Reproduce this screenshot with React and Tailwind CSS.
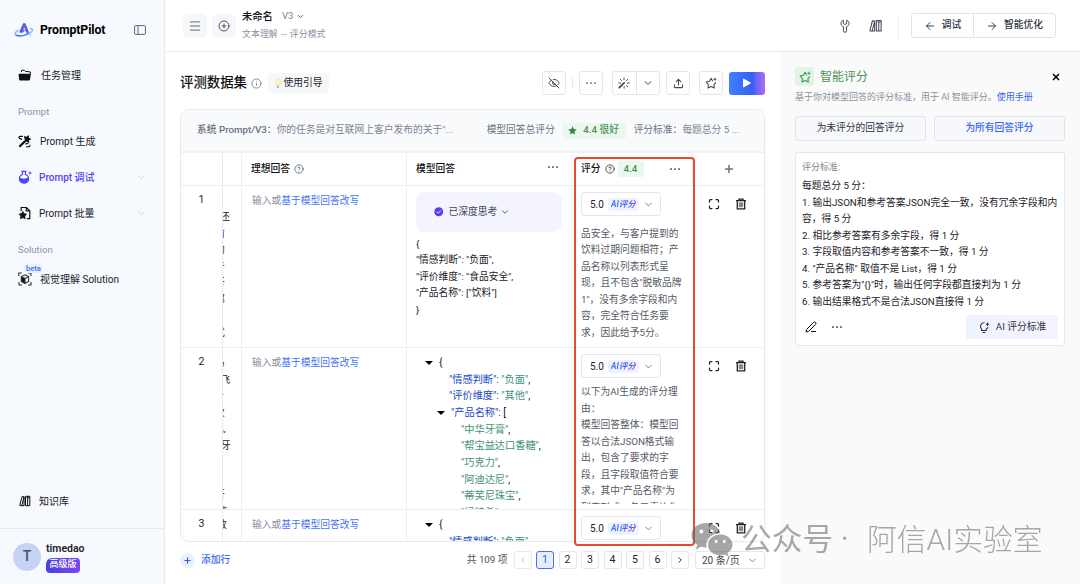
import React from 'react';
import {
  ArrowLeft,
  ArrowRight,
  ChevronDown,
  ChevronLeft,
  ChevronRight,
  CircleHelp,
  CirclePlus,
  EyeOff,
  Info,
  Maximize,
  Menu,
  PenLine,
  Plus,
  Upload,
  X,
} from 'lucide-react';

const ideal = '基于模型回答改写';

const criteria = [
  '每题总分 5 分：',
  '1. 输出JSON和参考答案JSON完全一致，没有冗余字段和内',
  '容，得 5 分',
  '2. 相比参考答案有多余字段，得 1 分',
  '3. 字段取值内容和参考答案不一致，得 1 分',
  '4. "产品名称" 取值不是 List，得 1 分',
  '5. 参考答案为"{}"时，输出任何字段都直接判为 1 分',
  '6. 输出结果格式不是合法JSON直接得 1 分',
];

const reasonOne = [
  '品安全，与客户提到的',
  '饮料过期问题相符；产',
  '品名称以列表形式呈',
  '现，且不包含"脱敏品牌',
  '1"，没有多余字段和内',
  '容，完全符合任务要',
  '求，因此给予5分。',
];

const reasonTwo = [
  '以下为AI生成的评分理',
  '由：',
  '模型回答整体：模型回',
  '答以合法JSON格式输',
  '出，包含了要求的字',
  '段，且字段取值符合要',
  '求，其中"产品名称"为',
  '列表形式，各元素均为',
];

// Column scrolled under the index column, only the tail of each line shows
const clippedOne = [
  ['还', -3],
  ['前', -8],
  ['的', -8],
  ['于', -8],
  ['行', -8],
  ['部', -8],
  ['', 0],
  ['式', -8],
];
const clippedTwo = [
  ['马', -8],
  ['飞', -2.5],
  ['一', -9],
  ['次', -8],
  ['乱,', -9],
  ['牙', -2],
  ['', 0],
  ['', 0],
  ['行', -8],
  ['能', -5],
];
const clippedThree = [['敢', -6]];

function Dots({ className = '' }) {
  return (
    <svg viewBox="0 0 12 4" className={`h-1 w-3 shrink-0 ${className}`} fill="currentColor">
      <circle cx="2" cy="2" r="0.85" />
      <circle cx="6" cy="2" r="0.85" />
      <circle cx="10" cy="2" r="0.85" />
    </svg>
  );
}

function StarIcon({ className = '' }) {
  return (
    <svg viewBox="0 0 16 16" className={className} fill="none" stroke="currentColor" strokeWidth="1.4" strokeLinejoin="round">
      <path d="M10.4 5.6 8.2 1.8 6 5.6 1.5 6.7l3 3.4-.5 4.6 4.2-1.9 4.2 1.9-.5-4.6 2.5-2.9" />
      <path d="M13.3 1v4M11.3 3h4" strokeWidth="1.2" />
    </svg>
  );
}

function BooksIcon({ className = '' }) {
  return (
    <svg viewBox="0 0 14 14" className={className} fill="none" stroke="currentColor" strokeWidth="1.1" strokeLinejoin="round">
      <path d="M7.6 1.5h5v11h-5zM10.1 1.5v11M9 3.2h3" />
      <path d="m3.6 1.8 2.3.4L3.2 12.6l-2.3-.5zM5.9 2v10.5H3.2" />
    </svg>
  );
}

function WandIcon() {
  return (
    <svg viewBox="0 0 14 14" className="size-3" fill="none" stroke="currentColor" strokeWidth="1.1" strokeLinecap="round">
      <path d="m1.5 12.5 5.8-5.8" strokeWidth="2" />
      <path d="M7 1v2.2M11.4 2.6 9.7 4.3M13 7h-2.2M11.4 11.4 9.9 9.9M7.2 13v-2M2.6 2.6l1.6 1.6M1 7h2" />
    </svg>
  );
}

function TrashIcon() {
  return (
    <svg viewBox="0 0 12 12" className="size-3" fill="none" stroke="#222" strokeWidth="1.3">
      <path d="M1 2.7h10M4 2.3V1.2h4v1.1M2.3 2.9v7.9h7.4V2.9" />
      <path d="M4.2 4.8h3.6v4H4.2z" fill="#888" stroke="#777" strokeWidth="0.8" />
    </svg>
  );
}

function Logo() {
  return (
    <svg viewBox="0 0 20 16" className="h-4 w-5" fill="none">
      <path d="M5 10.5 9.2 1.2h2.1l3.9 9.6h-3L10.2 5l-1 2.8 2.2.3-3 2.6z" fill="#5b57e8" />
      <path d="M4.5 8.2C1 10 .2 12.4 2.3 13.5c3.3 1.6 11.2-.3 14.7-3.3 2.4-2 1.9-3.5-.9-3.7" stroke="#7cbcf8" strokeWidth="1.5" />
      <path d="M2.1 13.1c3.8 1.5 9.4.2 12.9-2.1" stroke="#3f7bf0" strokeWidth="1.3" />
      <circle cx="16.5" cy="13" r="0.8" fill="#7cbcf8" />
    </svg>
  );
}

function FolderIcon() {
  return (
    <svg viewBox="0 0 14 12" className="h-3 w-3.5" fill="#111">
      <path d="M1.6 4.7h10.2a1 1 0 0 1 1 1.2l-.8 4.6a1.2 1.2 0 0 1-1.2 1H2.3a1.2 1.2 0 0 1-1.2-1L.6 5.9a1 1 0 0 1 1-1.2z" />
      <path d="m3.3 3 .5-1.9 2.6.3.8.9 5 .6.3 2" fill="none" stroke="#111" strokeWidth="1" />
    </svg>
  );
}

function GenerateIcon() {
  return (
    <svg viewBox="0 0 14 14" className="size-[13px]" fill="none" stroke="#111" strokeWidth="1.2">
      <path d="m1.5 12.7 6-6" strokeWidth="2.4" />
      <path d="m7.2 2 2 .7 1.8-1.5.2 2.2 2 1-1.8 1.1v2.3L9.5 6.5l-2.3.7.7-2.1z" fill="#111" />
      <path d="M5.3 1.5H2.2a1 1 0 0 0 0 2.4c1.4 0 1.8.6 1.8 1.6M8.2 10.3c0-1.3 1.4-1.3 2.8-1.3M12.5 10.5c1 1.2 0 2.4-1.4 2.2H8.7" />
    </svg>
  );
}

function FlaskIcon() {
  return (
    <svg viewBox="0 0 14 14" className="size-[14px]" fill="none" stroke="#5147f5" strokeWidth="1.2">
      <path d="M3.2 1.4h5.4M4.5 1.5v3C2.4 5.3 1.3 7 1.5 9c.3 2.3 2 3.9 4.5 3.9s4.3-1.6 4.5-3.9c.2-2-1-3.7-3.1-4.5v-3" />
      <path d="M1.5 8.8c2-.9 3.3.9 5 .5 1.500-.3 2.200-1.200 4-.8-.2 2.700-2 4.400-4.500 4.400S1.700 11.300 1.500 8.800z" fill="#5147f5" />
      <path d="M12 1.500v3M10.500 3h3" strokeWidth="1" />
    </svg>
  );
}

function BatchIcon() {
  return (
    <svg viewBox="0 0 14 14" className="size-[14px]" fill="none" stroke="#111" strokeWidth="1.2">
      <path d="M3.2 5V1.500h5.300l3.300 3.200v8H8.800M8.300 1.500v3.400h3.400" />
      <path d="m4.800 5.300 1.300 2.300 2.600.5-1.800 2 .3 2.700-2.400-1.100-2.400 1.100.3-2.700-1.800-2 2.600-.5z" fill="#111" strokeWidth="0.6" />
    </svg>
  );
}

function CubeIcon() {
  return (
    <svg viewBox="0 0 14 14" className="size-[14px]" fill="none" stroke="#333" strokeWidth="1.1">
      <path d="M.8 4V1h3M10 1h3v3M13 10v3h-3M4 13H1v-3" />
      <path d="m7 2.800 3.600 1.800v4.800L7 11.300 3.400 9.400V4.600z" />
      <path d="M7 6.400 3.400 4.600v4.800L7 11.300z" fill="#111" />
      <path d="m7 6.400 3.600-1.800" />
    </svg>
  );
}

function NavItem({ icon, label, active, arrow, gap }) {
  return (
    <div className="flex h-9 items-center pr-[17px] pl-[17px]">
      <span className="flex w-[15px] justify-center">{icon}</span>
      <span className={`${gap || 'ml-2'} flex-1 text-[10px] whitespace-pre ${active ? 'font-medium text-[#5147f5]' : 'text-[#1d2129]'}`}>
        {label}
      </span>
      {arrow && <ChevronDown className="size-[11px] text-[#c3c8d0]" strokeWidth={1.6} />}
    </div>
  );
}

function Sidebar() {
  return (
    <aside className="flex h-full w-[165px] shrink-0 flex-col border-r border-[#e6e9ef] bg-[#f6f9fe]">
      <div className="flex h-[57px] items-center pt-[3px] pr-[18px] pl-[14px]">
        <Logo />
        <span className="ml-1.5 flex-1 text-[12.300px] font-bold tracking-[-0.1px] text-black">PromptPilot</span>
        <svg viewBox="0 0 12 10" className="h-[10px] w-3" fill="none" stroke="#5d6470" strokeWidth="1">
          <rect x="0.600" y="0.600" width="10.800" height="8.800" rx="1" />
          <path d="M4 .6v8.800" />
        </svg>
      </div>
      <NavItem icon={<FolderIcon />} label="任务管理" gap="ml-[9px]" />
      <div className="mt-[9px] flex h-[21px] items-center pl-[18px] text-[9.500px] text-[#8b94a8]">Prompt</div>
      <NavItem icon={<GenerateIcon />} label="Prompt 生成" />
      <NavItem icon={<FlaskIcon />} label="Prompt 调试" gap="ml-[7px]" active arrow />
      <NavItem icon={<BatchIcon />} label="Prompt 批量" gap="ml-[7px]" arrow />
      <div className="mt-[9px] flex h-[21px] items-center pl-[18px] text-[9.500px] text-[#8b94a8]">Solution</div>
      <div className="relative">
        <NavItem icon={<CubeIcon />} label="视觉理解 Solution" />
        <span className="absolute top-[3px] left-6 rounded-full bg-[#e6f0ff] px-0.5 text-[7.500px] leading-[9px] font-medium text-[#3b6bf5]">beta</span>
      </div>
      <div className="flex-1" />
      <NavItem icon={<BooksIcon className="size-3" />} label="知识库" gap="ml-[7px]" />
      <div className="mt-[9px] flex h-14 items-center border-t border-[#e6e9ef] pl-[13px]">
        <div className="flex size-[28px] items-center justify-center rounded-full bg-[#c6d3f7] text-[14px] font-medium text-[#4c5260]">T</div>
        <div className="ml-[5px] pt-px">
          <div className="text-[10.500px] leading-[14px] font-semibold text-[#1d2129]">timedao</div>
          <div className="mt-0.5 flex h-[15px] w-[34px] items-center justify-center rounded-[4px] rounded-tl-[6px] bg-linear-to-r from-[#4a41dc] to-[#7845f6] text-[9px] font-medium text-white">
            高级版
          </div>
        </div>
      </div>
    </aside>
  );
}

function Header() {
  return (
    <header className="flex h-[52px] shrink-0 items-center border-b border-[#e8eaee] bg-white pr-6 pl-[18px]">
      <button className="flex size-6 items-center justify-center rounded-[5px] bg-[#f6f7f9]">
        <Menu className="size-[14px] text-[#596070]" strokeWidth={1.600} />
      </button>
      <button className="ml-[5px] flex size-6 items-center justify-center rounded-[5px] bg-[#f6f7f9]">
        <CirclePlus className="size-3 text-[#4e5460]" strokeWidth={2} />
      </button>
      <div className="ml-1.5 h-[36px]">
        <div className="flex h-[18px] items-center text-[10.300px] font-medium text-[#111]">
          未命名
          <span className="ml-[9px] text-[9.500px] font-normal text-[#7b8391]">V3</span>
          <ChevronDown className="ml-[3px] size-[9px] text-[#5a6270]" strokeWidth={2.500} />
        </div>
        <div className="flex h-[18px] items-center text-[8.950px] whitespace-pre text-[#8a919f]">
          文本理解<span className="mx-[3px] h-px w-[6px] bg-[#c3c7ce]" />评分模式
        </div>
      </div>
      <div className="flex-1" />
      <svg viewBox="0 0 12 14" className="h-[14px] w-3 text-[#444b57]" fill="none" stroke="currentColor" strokeWidth="1" strokeLinejoin="round">
        <path d="M4.300 1.200v3.300L6 5.500l1.700-1V1.200c1.600.7 2.500 2 2.300 3.600C9.900 6.200 9 7.100 7.500 7.700v4.100a1.500 1.500 0 0 1-3 0V7.700C3 7.100 2.100 6.200 2 4.800c-.2-1.600.7-2.900 2.300-3.600z" />
      </svg>
      <BooksIcon className="ml-[18px] size-[13.500px] text-[#444b57]" />
      <div className="ml-4 h-6 w-px bg-[#eceef1]" />
      <div className="ml-3 flex h-[25px] rounded-[3px] border border-[#e0e3e9] text-[9.750px] font-medium text-[#30353f]">
        <button className="flex w-[62px] items-center justify-center border-r border-[#e0e3e9]">
          <ArrowLeft className="mr-[6px] size-[12px]" strokeWidth={1.900} />调试
        </button>
        <button className="flex w-[81px] items-center justify-center">
          <ArrowRight className="mr-[6px] size-[12px]" strokeWidth={1.900} />智能优化
        </button>
      </div>
    </header>
  );
}

function Toolbar() {
  const box = 'flex size-6 items-center justify-center rounded-[3px] border border-[#e3e6ec] text-[#3f4550]';
  return (
    <div className="flex h-6 items-center">
      <h1 className="text-[13.400px] font-medium text-[#111]">评测数据集</h1>
      <Info className="ml-1 size-[11px] text-[#7a818e]" strokeWidth={2} />
      <button className="ml-[6px] flex h-5 w-[61px] items-center justify-center rounded-[3px] bg-[#f6f7f9] text-[9.750px] text-[#22262e]">
        <svg viewBox="0 0 8 12" className="mr-px h-[11px] w-2">
          <path d="M4 1a3 3 0 0 1 3 3c0 1.500-1.300 2-1.500 4h-3C2.300 6 1 5.500 1 4a3 3 0 0 1 3-3z" fill="#fff3c4" stroke="#f3e1a0" strokeWidth="0.600" />
          <path d="M2.800 9h2.400M3.200 10.400h1.600" stroke="#9a9a9a" strokeWidth="1" />
        </svg>
        使用引导
      </button>
      <div className="flex-1" />
      <button className={box}>
        <EyeOff className="size-3" strokeWidth={1.900} />
      </button>
      <div className="ml-[6px] h-3 w-px bg-[#e6e8ec]" />
      <button className={`${box} ml-[6px]`}>
        <Dots />
      </button>
      <div className="ml-[9px] flex h-6 w-12 rounded-[3px] border border-[#e3e6ec] text-[#3f4550]">
        <span className="flex flex-1 items-center justify-center border-r border-[#e3e6ec]">
          <WandIcon />
        </span>
        <span className="flex flex-1 items-center justify-center">
          <ChevronDown className="size-3" strokeWidth={2} />
        </span>
      </div>
      <button className={`${box} ml-[6px]`}>
        <Upload className="size-[11px]" strokeWidth={2.300} />
      </button>
      <button className={`${box} ml-[9px]`}>
        <StarIcon className="size-[12px]" />
      </button>
      <button className="ml-[6px] flex h-[23px] w-9 items-center justify-center rounded-[3px] bg-linear-to-r from-[#4080ff] via-[#365ff5] via-65% to-[#ae6af5]">
        <svg viewBox="0 0 10 10" className="size-[10px]" fill="#fff" stroke="#fff" strokeWidth="1" strokeLinejoin="round">
          <path d="M1.500 1v8l7-4z" />
        </svg>
      </button>
    </div>
  );
}

function ScoreSelect() {
  return (
    <div className="flex h-6 w-20 items-center rounded-[3px] border border-[#e3e6ec] bg-white pl-2 text-[10px] text-[#1d2129]">
      5.0
      <span className="ml-[4px] rounded-[4px] bg-linear-to-r from-[#eaf3ff] to-[#f6f0ff] px-[3px] text-[8.500px] leading-[13px] font-bold">
        <span className="bg-linear-to-r from-[#3e78fb] to-[#6256f2] bg-clip-text text-transparent italic">AI评分</span>
      </span>
      <ChevronDown className="ml-[4px] size-[11px] text-[#5f6675]" strokeWidth={1.800} />
    </div>
  );
}

function Lines({ lines, className }) {
  return (
    <div className={className}>
      {lines.map((line) => (
        <div key={line} className="h-[16.500px] leading-[16.500px] whitespace-pre">
          {line}
        </div>
      ))}
    </div>
  );
}

function Clipped({ lines, className }) {
  return (
    <div className={`overflow-hidden border-r border-[#eceef3] text-[#1d2129] ${className}`}>
      {lines.map(([char, shift], i) => (
        <div key={i} className="h-[16.500px] leading-[16.500px] whitespace-nowrap" style={{ marginLeft: shift }}>
          {char}
        </div>
      ))}
    </div>
  );
}

function Caret() {
  return <span className="mr-[6px] h-0 w-0 border-x-4 border-t-[4.500px] border-x-transparent border-t-black" />;
}

function JsonPair({ name, value }) {
  return (
    <div className="h-[16.600px] pl-[24px] whitespace-pre">
      <span className="text-[#2148c7]">"{name}": </span>
      <span className="text-[#42917d]">"{value}"</span>,
    </div>
  );
}

function JsonTree({ kind, items }) {
  return (
    <div className="pt-[7px] pl-[9px] text-[10.200px] leading-[16.600px] text-[#111]">
      <div className="flex h-[16.600px] items-center"><Caret />{'{'}</div>
      <JsonPair name="情感判断" value="负面" />
      <JsonPair name="评价维度" value={kind} />
      <div className="flex h-[17px] items-center pl-3 whitespace-pre">
        <Caret /><span className="text-[#2148c7]">"产品名称": </span>[
      </div>
      {items.map((item) => (
        <div key={item} className="h-[16.600px] pl-[36px]">
          <span className="text-[#42917d]">"{item}"</span>,
        </div>
      ))}
    </div>
  );
}

function Row({ index, clipped, clipPad, last, model, reason }) {
  return (
    <div className={`grid grid-cols-[42px_19px_165px_165px_121px_71px] overflow-hidden ${last ? 'h-[31px]' : 'h-[162px] border-b border-[#eceef3]'}`}>
      <div className="border-r border-[#e6e8ef] pt-[6px] text-center text-[10.500px] leading-4 text-[#1d2129]">{index}</div>
      <Clipped lines={clipped} className={clipPad} />
      <div className="border-r border-[#eceef3] pt-[7px] pl-[10px] leading-4 text-[#8a909c]">
        输入或<span className="text-[#4673f7]">{ideal}</span>
      </div>
      <div className="overflow-hidden border-r border-[#eceef3] pl-[9px]">{model}</div>
      <div className="overflow-hidden pt-[6px] pl-[9px]">
        <ScoreSelect />
        {reason}
      </div>
      <div className="flex h-6 items-center justify-between pt-3 pr-[17px] pl-[15px]">
        <Maximize className="size-[12px] text-[#222]" strokeWidth={2.500} />
        <TrashIcon />
      </div>
    </div>
  );
}

function DataTable() {
  return (
    <div className="mt-[14px] h-[433px] overflow-hidden rounded-[9px] border border-[#e6e9f0] text-[9.750px]">
      <div className="flex h-[43px] items-center border-b-2 border-[#eff1f5] bg-[#f9fafc] pl-4 whitespace-pre text-[#7d8492]">
        <span className="font-medium text-[#6b7280]">系统 Prompt/V3：</span>
        <span className="w-[210px]">你的任务是对互联网上客户发布的关于"...</span>
        <span className="w-[75px] text-[#6b7280]">模型回答总评分</span>
        <span className="mr-2 flex h-4 w-16 items-center justify-center rounded-[2px] bg-[#ecf7ef] font-medium text-[#4a9258]">
          <svg viewBox="0 0 10 10" className="mr-[6px] size-[9px]" fill="#37864a">
            <path d="m5 .4 1.400 2.900 3.200.5-2.300 2.300.5 3.300L5 7.900 2.200 9.400l.5-3.300L.4 3.800l3.200-.5z" />
          </svg>
          4.4 很好
        </span>
        <span className="text-[#6b7280]">评分标准：</span>
        <span>每题总分 5 ...</span>
      </div>
      <div className="grid h-[33px] grid-cols-[42px_19px_165px_165px_121px_71px] border-b border-[#eceef3] font-medium text-[#111]">
        <div className="border-r border-[#e6e8ef]" />
        <div className="border-r border-[#eceef3]" />
        <div className="flex items-center border-r border-[#eceef3] pl-[9px]">
          理想回答
          <CircleHelp className="ml-[4px] size-[10px] text-[#555b66]" strokeWidth={1.900} />
        </div>
        <div className="flex items-center justify-between border-r border-[#eceef3] pr-3 pl-[9px]">
          模型回答
          <Dots className="mb-1" />
        </div>
        <div className="flex items-center border-r border-[#eceef3] pl-[9px]">
          评分
          <CircleHelp className="ml-[4px] size-[10px] text-[#333]" strokeWidth={2} />
          <span className="ml-[3px] flex h-4 w-[26px] items-center justify-center rounded-[2px] bg-[#ecf7ef] text-[#4a9258]">4.4</span>
          <Dots className="ml-[25px]" />
        </div>
        <div className="flex items-center justify-center">
          <Plus className="size-3 text-[#6a7180]" strokeWidth={3} />
        </div>
      </div>
      <Row
        index={1}
        clipped={clippedOne}
        clipPad="pt-[23px]"
        model={
          <div className="pt-[6px] text-[#1d2129]">
            <div className="mb-[3.500px] flex h-10 w-[146px] items-center rounded-[9px] bg-[#f4f4ff] pl-[18px] text-[#3d4350]">
              <svg viewBox="0 0 10 10" className="mr-[5px] size-[9.500px]">
                <circle cx="5" cy="5" r="4.700" fill="#5b3df0" />
                <path d="m3 5 1.500 1.500L7.200 3.800" fill="none" stroke="#fff" strokeWidth="1" />
              </svg>
              已深度思考
              <ChevronDown className="ml-[3px] size-[10px]" strokeWidth={2} />
            </div>
            <Lines lines={['{', '"情感判断": "负面",', '"评价维度": "食品安全",', '"产品名称": ["饮料"]', '}']} />
          </div>
        }
        reason={<Lines lines={reasonOne} className="pt-[9.500px] text-[#555b66]" />}
      />
      <Row
        index={2}
        clipped={clippedTwo}
        clipPad="pt-[7px]"
        model={<JsonTree kind="其他" items={['中华牙膏', '帮宝益达口香糖', '巧克力', '阿迪达尼', '蒂芙尼珠宝', '绿特希']} />}
        reason={<Lines lines={reasonTwo} className="h-[126px] overflow-hidden pt-[6px] text-[#555b66]" />}
      />
      <Row index={3} clipped={clippedThree} clipPad="pt-[7px]" model={<JsonTree kind="其他" items={[]} />} last />
    </div>
  );
}

function Pagination() {
  const pages = [2, 3, 4, 5, 6];
  return (
    <div className="mt-[9px] flex h-[18px] items-center text-[9.750px] text-[#3d4350]">
      <span className="flex size-[15px] items-center justify-center rounded-full bg-[#ebf0ff]">
        <Plus className="size-[9px] text-[#2f5bea]" strokeWidth={3} />
      </span>
      <span className="ml-[6px] font-medium text-[#3b66f0]">添加行</span>
      <div className="flex-1" />
      <span className="mr-[6px] text-[#4e5460]">共 109 项</span>
      <div className="flex gap-[4.500px] text-[10.500px] text-[#1d2129]">
        <span className="flex size-[18px] items-center justify-center rounded-[3px] border border-[#e6e9ef]">
          <ChevronLeft className="size-[10px] text-[#b8bdc7]" />
        </span>
        <span className="flex size-[18px] items-center justify-center rounded-[3px] border border-[#4a72e8] bg-[#e6edfe] text-[#2f5bea]">1</span>
        {pages.map((page) => (
          <span key={page} className="flex size-[18px] items-center justify-center rounded-[3px] border border-[#e3e6ec]">
            {page}
          </span>
        ))}
        <span className="flex size-[18px] items-center justify-center rounded-[3px] border border-[#e3e6ec]">
          <ChevronRight className="size-[10px]" strokeWidth={2.200} />
        </span>
      </div>
      <span className="ml-[6px] flex h-[18px] w-[70px] items-center justify-between rounded-[3px] border border-[#e3e6ec] pr-[6px] pl-[6px] text-[10px]">
        20 条/页
        <ChevronDown className="size-[11px] text-[#5f6675]" strokeWidth={1.800} />
      </span>
    </div>
  );
}

function ScorePanel() {
  return (
    <aside className="w-[300px] shrink-0 bg-[#fafafa] px-[15px] pt-[15px]">
      <div className="flex h-[19px] items-center">
        <span className="flex size-[19px] items-center justify-center rounded-[3px] bg-[#e2f4e6] text-[#3d8c4f]">
          <StarIcon className="size-3" />
        </span>
        <span className="ml-[6px] flex-1 text-[12px] text-[#4a9258]">智能评分</span>
        <X className="mr-[4px] size-[10px] text-black" strokeWidth={4} />
      </div>
      <div className="mt-[3px] h-4 text-[9px] leading-4 whitespace-nowrap text-[#8a909c]">
        基于你对模型回答的评分标准，用于 AI 智能评分。<span className="text-[#3b66f5]">使用手册</span>
      </div>
      <div className="mt-[11px] flex gap-2 text-[9.750px]">
        <button className="h-[25px] flex-1 rounded-[3px] border border-[#e0e4ec] bg-[#f6f8fb] text-[#30353f]">为未评分的回答评分</button>
        <button className="h-[25px] flex-1 rounded-[3px] border border-[#e0e4ec] bg-[#f6f8fb] font-medium text-[#3b66f5]">为所有回答评分</button>
      </div>
      <div className="mt-[11px] h-[194px] rounded-[3px] border border-[#e3e6ec] bg-white px-[6px] pt-[6px] text-[9.750px]">
        <div className="h-4 text-[9px] leading-4 text-[#7a818e]">评分标准:</div>
        <Lines lines={criteria} className="pt-[3px] text-[#1d2129]" />
        <div className="mt-[5px] flex h-6 items-center">
          <PenLine className="ml-[3px] size-3 text-black" strokeWidth={2} />
          <Dots className="ml-[14px]" />
          <div className="flex-1" />
          <button className="flex h-6 w-[92px] items-center justify-center rounded-[3px] bg-linear-to-r from-[#edf4ff] to-[#f6f2ff] text-[#30353f]">
            <svg viewBox="0 0 12 13" className="mr-[6px] h-[13px] w-3" fill="none" stroke="#333" strokeWidth="1.100">
              <path d="M6.500 1.500A4 4 0 0 0 3.600 8.300V9.500h4.600V8.300A4 4 0 0 0 9.800 6.300M4.500 11.500h3" />
              <path d="M9.500 1.500v3.400M7.800 3.200h3.400" />
            </svg>
            AI 评分标准
          </button>
        </div>
      </div>
    </aside>
  );
}

function Watermark() {
  return (
    <div className="pointer-events-none absolute top-[518px] left-[691px] flex h-[44px] items-center whitespace-pre text-[#7c7c7c] opacity-60">
      <svg viewBox="0 0 42 36" className="h-9 w-[42px] shrink-0">
        <path fill="#6c6c6c" fillRule="evenodd" d="M15.500 1C7 1 .5 6.400.5 13.200c0 4 2.200 7.300 5.700 9.600L4.800 27.500l5.300-2.700c2 .5 3.600.8 5.600.7C13.800 17.500 20.500 11 29.300 11.200 27.800 5.200 22 1 15.500 1zM10.300 7.500a2 2 0 1 1 0 4 2 2 0 0 1 0-4zm10.300 0a2 2 0 1 1 0 4 2 2 0 0 1 0-4z" />
        <path fill="#6c6c6c" fillRule="evenodd" d="M29.300 12.500c-7 0-12.300 4.700-12.300 10.400s5.300 10.300 12.300 10.300c1.500 0 2.900-.3 4.300-.7l4 2.200-1.100-3.700c3.100-2.300 5-4.900 5-8.100 0-5.700-5.500-10.400-12.200-10.400zM25.100 17.800a1.600 1.600 0 1 1 0 3.300 1.600 1.600 0 0 1 0-3.300zm8.200 0a1.600 1.600 0 1 1 0 3.300 1.600 1.600 0 0 1 0-3.300z" />
      </svg>
      <span className="ml-[8px] w-[126px] text-[30.700px] leading-[44px] text-[#707070]">公众号 ·</span>
      <span className="text-[29.800px] leading-[44px] font-light text-[#707070]">阿信AI实验室</span>
    </div>
  );
}

export default function App() {
  return (
    <div lang="zh-CN" className="relative flex h-[584px] w-[1080px] overflow-hidden bg-white font-['Roboto','Noto_Sans_CJK_SC',sans-serif]">
      <Sidebar />
      <div className="flex min-w-0 flex-1 flex-col">
        <Header />
        <div className="flex min-h-0 flex-1">
          <main className="w-[615px] shrink-0 pt-[19px] pr-[15px] pl-[15px]">
            <Toolbar />
            <DataTable />
            <Pagination />
          </main>
          <ScorePanel />
        </div>
      </div>
      {/* highlighted score column */}
      <div className="pointer-events-none absolute top-[157px] left-[574px] h-[389px] w-[121px] rounded-[4px] border-2 border-[#e84a2e]" />
      <Watermark />
    </div>
  );
}
